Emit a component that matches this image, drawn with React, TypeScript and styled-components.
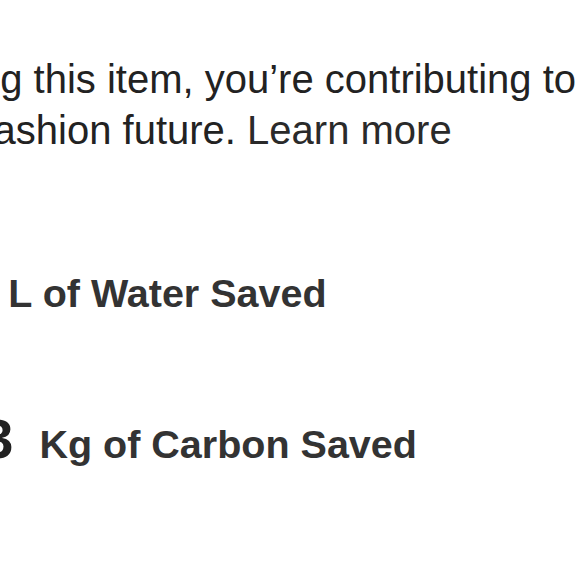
import styled, { createGlobalStyle } from "styled-components";

const GlobalStyle = createGlobalStyle`
    html, body {
        margin: 0;
        padding: 0;
        background: #ffffff;
        overflow: hidden;
    }
`

const Panel = styled.section`
    display: flex;
    flex-direction: column;
    margin-left: -231px;
    padding-top: 54px;
    width: 1100px;
    font-family: "Liberation Sans", Arial, sans-serif;
`

const Intro = styled.p`
    margin: 0;
    color: #222222;
    font-size: 40px;
    line-height: 51px;
    white-space: nowrap;
`

const LearnMore = styled.a`
    color: #2a2a2a;
    text-decoration: none;
    cursor: pointer;
`

const StatList = styled.ul`
    display: flex;
    flex-direction: column;
    gap: 84px;
    list-style: none;
    margin: 98px 0 0;
    padding: 0 0 0 151px;
`

const StatRow = styled.li`
    display: flex;
    align-items: baseline;
    gap: 26px;
    color: #333333;
`

const StatValue = styled.span`
    font-size: 56px;
    font-weight: 700;
    line-height: 67px;
    color: #222222;
`

const StatLabel = styled.span`
    font-size: 39.5px;
    font-weight: 700;
`

const stats = [
    { value: "64", label: "L of Water Saved" },
    { value: "103", label: "Kg of Carbon Saved" },
]

export default function App() {
    return (
        <>
            <GlobalStyle />
            <Panel>
                <Intro>
                    By purchasing this item, you’re contributing to a more
                    <br />
                    sustainable fashion future. <LearnMore>Learn more</LearnMore>
                </Intro>
                <StatList>
                    {stats.map((stat) => (
                        <StatRow key={stat.label}>
                            <StatValue>{stat.value}</StatValue>
                            <StatLabel>{stat.label}</StatLabel>
                        </StatRow>
                    ))}
                </StatList>
            </Panel>
        </>
    )
}
